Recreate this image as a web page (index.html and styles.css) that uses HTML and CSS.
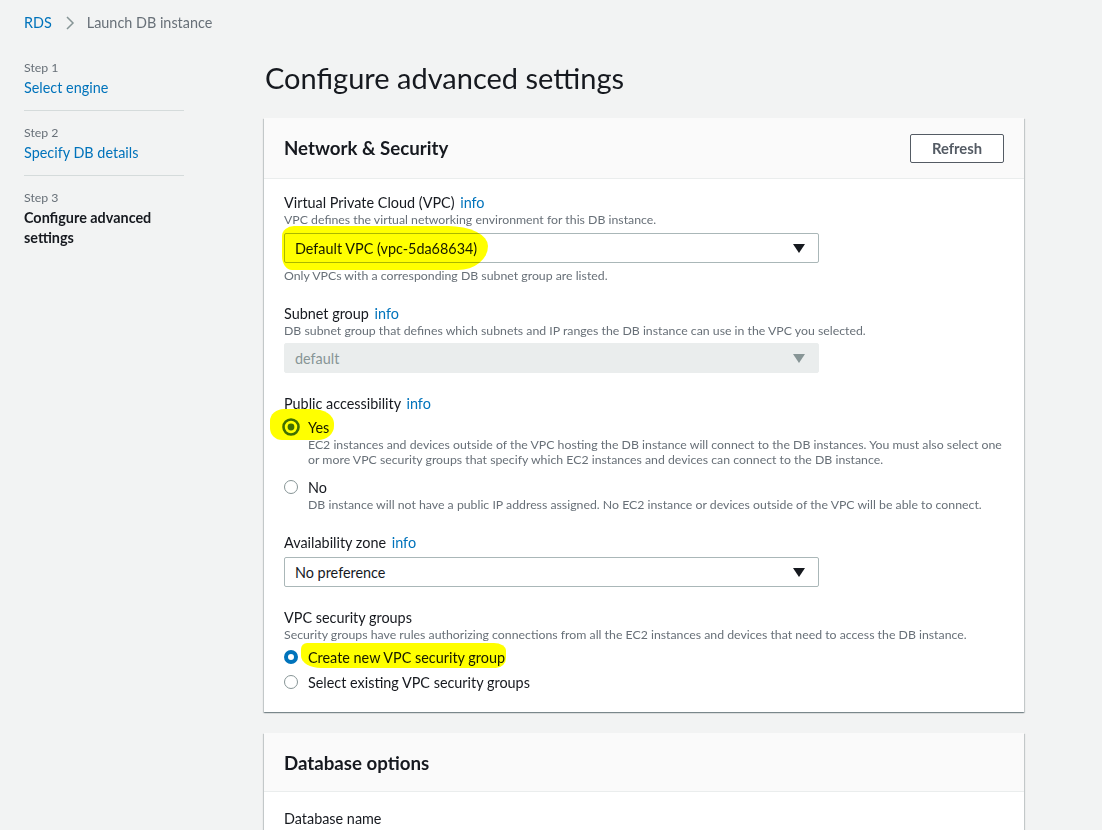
FILE: index.html
```html
<!DOCTYPE html>
<html lang="en">
<head>
<meta charset="utf-8">
<title>Launch DB instance</title>
<link rel="stylesheet" href="styles.css">
</head>
<body>
<header class="breadcrumb">
  <a class="crumb-link" href="#">RDS</a>
  <svg class="chev" width="10" height="16" viewBox="0 0 10 16"><polyline points="2,2 8,8 2,14" fill="none" stroke="#879596" stroke-width="1.5"/></svg>
  <span class="crumb-current">Launch DB instance</span>
</header>
<div class="layout">
  <nav class="steps">
    <div class="step">
      <div class="step-num">Step 1</div>
      <a class="step-link" href="#">Select engine</a>
    </div>
    <div class="step">
      <div class="step-num">Step 2</div>
      <a class="step-link" href="#">Specify DB details</a>
    </div>
    <div class="step last">
      <div class="step-num">Step 3</div>
      <div class="step-current">Configure advanced settings</div>
    </div>
  </nav>
  <main class="main">
    <h1 class="title">Configure advanced settings</h1>

    <section class="panel">
      <div class="panel-head">
        <h2 class="panel-title">Network &amp; Security</h2>
        <button class="btn">Refresh</button>
      </div>
      <div class="panel-body">
        <div class="field">
          <div class="label">Virtual Private Cloud (VPC) <a class="info" href="#">info</a></div>
          <div class="desc">VPC defines the virtual networking environment for this DB instance.</div>
          <div class="select">
            <span class="select-text">Default VPC (vpc-5da68634)</span>
            <span class="arrow"></span>
            <span class="hl hl-vpc"></span>
          </div>
          <div class="help">Only VPCs with a corresponding DB subnet group are listed.</div>
        </div>

        <div class="field subnet">
          <div class="label">Subnet group <a class="info" href="#">info</a></div>
          <div class="desc">DB subnet group that defines which subnets and IP ranges the DB instance can use in the VPC you selected.</div>
          <div class="select disabled">
            <span class="select-text">default</span>
            <span class="arrow"></span>
          </div>
        </div>

        <div class="field">
          <div class="label">Public accessibility <a class="info" href="#">info</a></div>
          <div class="radio-row first">
            <svg class="radio-svg" width="18" height="18" viewBox="0 0 18 18"><circle cx="9" cy="9" r="7.5" fill="none" stroke="#3f7000" stroke-width="2.6"/><circle cx="9" cy="9" r="3.4" fill="#3f7000"/></svg>
            <span class="radio-label near">Yes</span>
            <span class="hl hl-yes"></span>
          </div>
          <div class="radio-desc">EC2 instances and devices outside of the VPC hosting the DB instance will connect to the DB instances. You must also select one or more VPC security groups that specify which EC2 instances and devices can connect to the DB instance.</div>
          <div class="radio-row spaced">
            <span class="radio"></span>
            <span class="radio-label">No</span>
          </div>
          <div class="radio-desc">DB instance will not have a public IP address assigned. No EC2 instance or devices outside of the VPC will be able to connect.</div>
        </div>

        <div class="field">
          <div class="label">Availability zone <a class="info" href="#">info</a></div>
          <div class="select">
            <span class="select-text">No preference</span>
            <span class="arrow"></span>
          </div>
        </div>

        <div class="field">
          <div class="label">VPC security groups</div>
          <div class="desc">Security groups have rules authorizing connections from all the EC2 instances and devices that need to access the DB instance.</div>
          <div class="radio-row first">
            <span class="radio checked"></span>
            <span class="radio-label">Create new VPC security group</span>
            <span class="hl hl-sg"></span>
          </div>
          <div class="radio-row tight">
            <span class="radio"></span>
            <span class="radio-label">Select existing VPC security groups</span>
          </div>
        </div>
      </div>
    </section>

    <section class="panel">
      <div class="panel-head short">
        <h2 class="panel-title">Database options</h2>
      </div>
      <div class="panel-body db">
        <div class="label">Database name</div>
      </div>
    </section>
  </main>
</div>
</body>
</html>
```
FILE: styles.css
```css
* { box-sizing: border-box; }
html, body { margin: 0; padding: 0; }
body {
  background: #f2f3f3;
  font-family: Lato, "Liberation Sans", sans-serif;
  color: #16191f;
  font-size: 14.4px;
  overflow: hidden;
  height: 830px;
}
a { text-decoration: none; }

.breadcrumb {
  display: flex;
  align-items: center;
  height: 46px;
  padding: 0 24px;
  font-size: 14.4px;
  line-height: 20px;
}
.crumb-link { color: #0073bb; }
.chev { margin: 0 12px 0 13px; }
.crumb-current { color: #687078; }

.layout {
  display: flex;
  padding: 0 24px;
}
.steps {
  width: 160px;
  padding-top: 14px;
  flex: none;
}
.step {
  padding: 0 0 12px;
  border-bottom: 1px solid #d5dbdb;
  margin-bottom: 14px;
}
.step.last { border-bottom: none; }
.step-num {
  font-size: 12.3px;
  line-height: 16px;
  color: #687078;
}
.step-link, .step-current {
  display: block;
  margin-top: 2px;
  font-size: 14.4px;
  line-height: 20px;
  color: #0073bb;
}
.step-current { color: #16191f; font-weight: 700; }

.main {
  width: 760px;
  margin-left: 80px;
  flex: none;
}
.title {
  margin: 14px 0 23px 1px;
  font-size: 29px;
  line-height: 35px;
  font-weight: 400;
  color: #16191f;
}

.panel {
  background: #fff;
  box-shadow: 0 1px 1px 0 rgba(0,28,36,.3), 1px 1px 1px 0 rgba(0,28,36,.15), -1px 1px 1px 0 rgba(0,28,36,.15);
  margin-bottom: 21px;
}
.panel-head {
  display: flex;
  align-items: center;
  justify-content: space-between;
  height: 61px;
  padding: 0 20px;
  background: #fafafa;
  border-bottom: 1px solid #eaeded;
}
.panel-head.short { height: 59px; padding-top: 1px; }
.panel-title {
  margin: 0;
  font-size: 18.7px;
  line-height: 22px;
  font-weight: 700;
  color: #16191f;
}
.btn {
  width: 94px;
  height: 29px;
  background: #fff;
  border: 1px solid #545b64;
  border-radius: 2px;
  font-family: inherit;
  font-size: 14.8px;
  font-weight: 700;
  color: #545b64;
  padding: 0;
}

.panel-body { padding: 14px 20px 20px; }
.panel-body.db { padding-top: 17px; }

.field + .field { margin-top: 21px; }
.field.subnet { margin-top: 20px; }
.label {
  font-size: 14.4px;
  line-height: 19px;
  color: #16191f;
}
.info { color: #0073bb; margin-left: 2px; }
.desc {
  font-size: 12.3px;
  line-height: 16px;
  color: #687078;
}
.help {
  margin-top: 5px;
  font-size: 12.3px;
  line-height: 16px;
  color: #687078;
}

.select {
  position: relative;
  display: flex;
  align-items: center;
  justify-content: space-between;
  width: 535px;
  height: 30px;
  margin-top: 5px;
  padding: 0 13px 0 10px;
  border: 1px solid #aab7b8;
  border-radius: 2px;
  background: #fff;
  font-size: 14.4px;
  color: #16191f;
}
.select.disabled {
  margin-top: 4px;
  background: #eaeded;
  border-color: #eaeded;
  color: #879596;
}
.arrow {
  width: 0;
  height: 0;
  border-left: 6px solid transparent;
  border-right: 6px solid transparent;
  border-top: 9px solid #16191f;
}
.select.disabled .arrow { border-top-color: #879596; }

.radio-row {
  position: relative;
  display: flex;
  align-items: center;
  height: 20px;
  margin-top: 6px;
}
.radio-row.first { margin-top: 4px; }
.radio-row.spaced { margin-top: 10px; }
.radio-row.tight { margin-top: 5px; }
.radio {
  width: 14px;
  height: 14px;
  border-radius: 50%;
  border: 1px solid #879596;
  background: #fff;
  flex: none;
}
.radio.checked {
  border: 4px solid #0073bb;
}
.radio-svg {
  flex: none;
  margin-left: -2px;
}
.radio-label {
  margin-left: 10px;
  font-size: 14.4px;
  color: #16191f;
}
.radio-label.near { margin-left: 8px; }
.radio-desc {
  margin-left: 24px;
  font-size: 12.3px;
  line-height: 15px;
  color: #687078;
}

.hl {
  position: absolute;
  background: #ffff00;
  mix-blend-mode: multiply;
  pointer-events: none;
}
.hl-vpc {
  left: -3px;
  top: -8px;
  width: 206px;
  height: 44px;
  border-radius: 12px 40px 30px 10px / 10px 20px 24px 14px;
}
.hl-yes {
  left: -14px;
  top: -8px;
  width: 64px;
  height: 31px;
  border-radius: 14px 22px 16px 12px / 12px 14px 14px 12px;
}
.hl-sg {
  left: 17px;
  top: -4px;
  width: 205px;
  height: 25px;
  border-radius: 6px 12px 10px 20px / 6px 8px 10px 12px;
}
```
